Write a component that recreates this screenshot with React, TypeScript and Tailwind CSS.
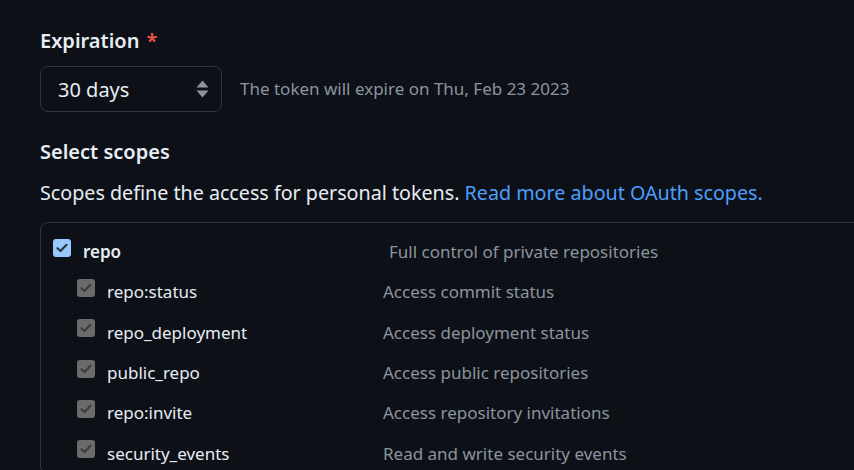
const scopes = [
    { name: "repo:status", desc: "Access commit status" },
    { name: "repo_deployment", desc: "Access deployment status" },
    { name: "public_repo", desc: "Access public repositories" },
    { name: "repo:invite", desc: "Access repository invitations" },
    { name: "security_events", desc: "Read and write security events" },
];

function Check({ parent }: { parent?: boolean }) {
    return (
        <span
            className={
                "flex h-[18px] w-[18px] shrink-0 -translate-y-[4px] items-center justify-center rounded-[3px] " +
                (parent ? "bg-[#99c8ff]" : "bg-[#6b6b6b]")
            }
        >
            <svg width="12" height="10" viewBox="0 0 12 10" fill="none">
                <path
                    d="M1.5 5.2 L4.5 8 L10.5 1.8"
                    stroke={parent ? "#2c3440" : "#3d3d3d"}
                    strokeWidth="2.2"
                    strokeLinecap="round"
                    strokeLinejoin="round"
                />
            </svg>
        </span>
    );
}

export default function App() {
    return (
        <div className="h-[470px] overflow-hidden bg-[#0d1117] pl-10 pt-[26px] font-['Noto_Sans','Open_Sans',sans-serif] text-[#e6edf3]">
            <div className="flex h-[30px] items-center gap-[7px] text-[20px] font-semibold leading-[30px]">
                Expiration <span className="text-[#f85149]">*</span>
            </div>

            <div className="mt-[10px] flex items-center gap-[18px]">
                <div className="flex h-[46px] w-[182px] items-center justify-between rounded-lg border border-[#30363d] bg-[#0d1117] pl-[17px] pr-[12px] text-[20px]">
                    <span className="pt-[2px]">30 days</span>
                    <svg width="13" height="18" viewBox="0 0 13 18" fill="#8b949e">
                        <path d="M6.5 0.5 L12.5 7.5 H0.5 Z" />
                        <path d="M0.5 10.5 H12.5 L6.5 17.5 Z" />
                    </svg>
                </div>
                <p className="text-[17px] text-[#8b949e]">
                    The token will expire on Thu, Feb 23 2023
                </p>
            </div>

            <h3 className="mt-[25px] h-[30px] text-[20px] font-semibold leading-[30px]">
                Select scopes
            </h3>
            <p className="mt-[11px] h-[30px] text-[19.7px] leading-[30px]">
                Scopes define the access for personal tokens.{" "}
                <a className="text-[#4c9efc]">Read more about OAuth scopes.</a>
            </p>

            <div className="mt-[14px] w-[900px] rounded-lg border border-[#30363d] pt-[14px]">
                <div className="flex h-[30px] items-center text-[17px]">
                    <div className="flex w-[348px] items-center gap-[12px] pl-3">
                        <Check parent />
                        <span className="font-semibold">repo</span>
                    </div>
                    <span className="text-[#8b949e]">Full control of private repositories</span>
                </div>
                <div className="mt-[5px]">
                    {scopes.map((s) => (
                        <div key={s.name} className="flex h-[40.3px] items-center text-[17px]">
                            <div className="flex w-[342px] items-center gap-[12px] pl-[36px]">
                                <Check />
                                <span>{s.name}</span>
                            </div>
                            <span className="text-[#8b949e]">{s.desc}</span>
                        </div>
                    ))}
                </div>
            </div>
        </div>
    );
}
